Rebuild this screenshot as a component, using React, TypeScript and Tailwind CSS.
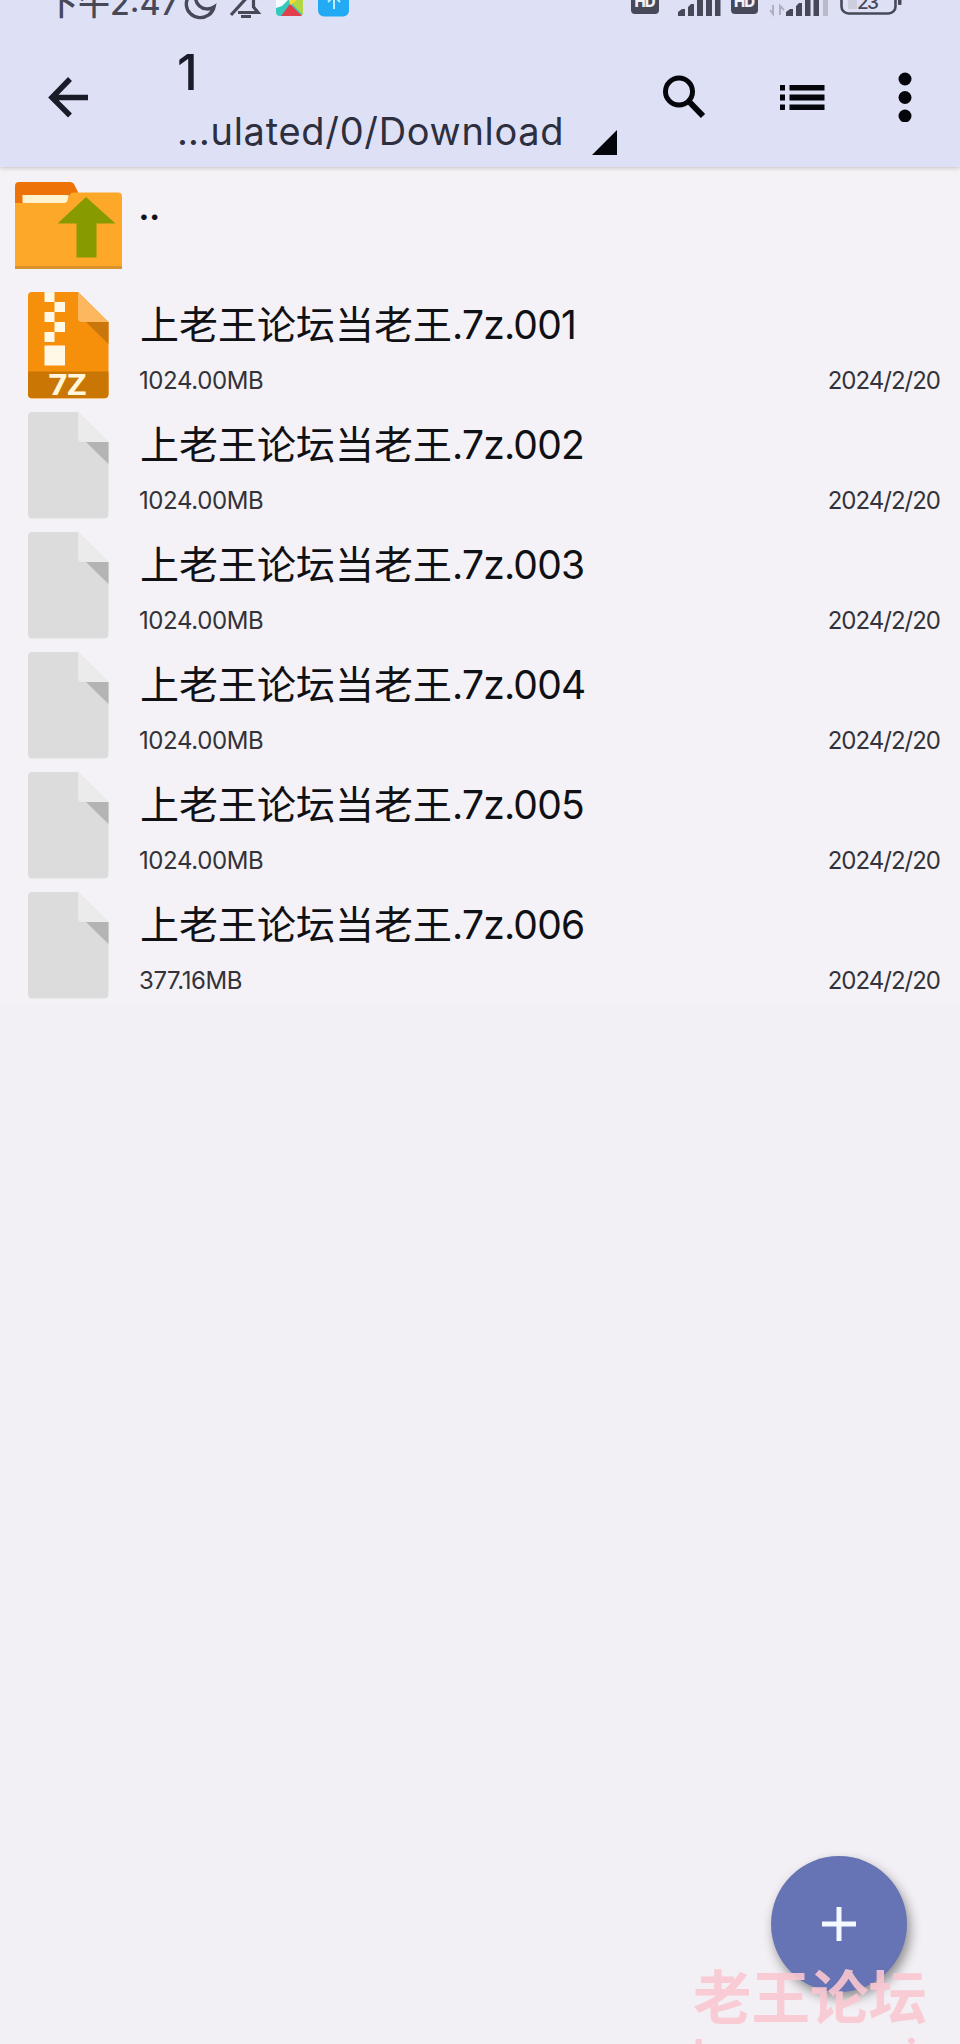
import React from "react";

const CJK = "font-['Inter','Noto_Sans_CJK_SC',sans-serif]";

const files = [
  { name: "001", size: "1024.00MB", archive: true },
  { name: "002", size: "1024.00MB", archive: false },
  { name: "003", size: "1024.00MB", archive: false },
  { name: "004", size: "1024.00MB", archive: false },
  { name: "005", size: "1024.00MB", archive: false },
  { name: "006", size: "377.16MB", archive: false },
];

function StatusLeftIcons() {
  return (
    <svg width="170" height="20" viewBox="184 0 170 20" className="shrink-0">
      <path d="M197 -9 A14 13.5 0 1 0 214 7 A12 12 0 0 1 197 -9Z" fill="none" stroke="#474959" strokeWidth="3.4" />
      <g fill="none" stroke="#474959" strokeWidth="3.2">
        <path d="M231 15 L252 -8" />
        <path d="M238 12.5 H258 L253.5 7 V-4" />
        <path d="M241 16.5 H251" strokeWidth="3" />
      </g>
      <path d="M276 0H303V12Q303 16 299 16H280Q276 16 276 12Z" fill="#33c9bd" />
      <path d="M276 0H288L282 6L276 8Z" fill="#f5fbff" />
      <path d="M291 0H303V15L293 5Z" fill="#b3d645" />
      <path d="M289 0H297L290 6Z" fill="#f7d93a" />
      <path d="M290 4L302 16H281Z" fill="#e13e4e" />
      <rect x="318" y="-14" width="31" height="30.500" rx="6" fill="#22abf4" />
      <path d="M334 9V-4M328 2L334 -4L340 2" fill="none" stroke="#c3edff" strokeWidth="2" />
    </svg>
  );
}

function StatusRightIcons() {
  return (
    <svg width="274" height="20" viewBox="630 0 274 20" className="shrink-0">
      <g fill="#474959">
        <rect x="631" y="-12" width="28" height="26" rx="4" />
        <rect x="731" y="-12" width="27" height="26" rx="4" />
        <path d="M678 16V12L682 9H685V16ZM688 16V7L691 4H694V16Z" />
        <path d="M697 0H703V16H697ZM706 0H712V16H706ZM715 0H720.500V16H715Z" />
        <path d="M786 16V12L790 9H793V16ZM796 16V6L799 3H802V16Z" />
        <path d="M805 0H810.500V16H805ZM813.500 0H819V16H813.500Z" />
        <rect x="898" y="-4" width="3.500" height="9" rx="1" />
      </g>
      <rect x="823" y="0" width="5" height="16" fill="#b9bbc9" />
      <path d="M773 5V14L770 10M780 15V6L784 10" fill="none" stroke="#aeb0c0" strokeWidth="2" />
      <rect x="848" y="0" width="9" height="9" fill="#cccede" />
      <rect x="841.500" y="-14" width="54" height="27.500" rx="7" fill="none" stroke="#474959" strokeWidth="2.600" />
      <g fontFamily="Inter, sans-serif">
        <text x="634.500" y="7" fontSize="15" fontWeight="800" fill="#eef0fc" textLength="21">HD</text>
        <text x="734" y="7" fontSize="15" fontWeight="800" fill="#eef0fc" textLength="21">HD</text>
        <text x="857" y="9" fontSize="19" fontWeight="500" fill="#474959" textLength="22">23</text>
      </g>
    </svg>
  );
}

function FolderUpIcon() {
  return (
    <svg width="108" height="88" viewBox="15 182 108 88">
      <path d="M15 203V186Q15 182 19 182H70Q73 182 74.500 185L78 192V203Z" fill="#ed7309" />
      <rect x="22.500" y="195" width="46" height="8" fill="#fff3cf" />
      <path d="M15 203H64Q67 203 67.500 200L70 194.500Q71 192.500 74 192.500H118Q122 192.500 122 196.500V269H15Z" fill="#fda829" />
      <path d="M15 202H22.500V203H15Z" fill="#ed7309" />
      <rect x="15" y="266" width="107" height="3" fill="#d9922c" />
      <path d="M86 197L115.500 223.500H96.500V257.500H76.500V223.500H57.500Z" fill="#879b00" />
    </svg>
  );
}

function FileIcon({ archive }: { archive: boolean }) {
  return (
    <svg width="82" height="108" viewBox="0 0 82 108">
      <path d="M4 0H50L80.500 30V102Q80.500 106.500 76 106.500H4Q0 106.500 0 102V4Q0 0 4 0Z" fill={archive ? "#f6900a" : "#dcdcdd"} />
      <path d="M50 0L80.500 30H54Q50 30 50 26Z" fill={archive ? "#fcb75f" : "#ebebec"} />
      <path d="M58 30H80.500V52Z" fill={archive ? "#c9760a" : "#b4b4b5"} />
      {archive && (
        <>
          <path d="M0 79.500H80.500V102Q80.500 106 76 106H4Q0 106 0 102Z" fill="#c97604" />
          <path d="M16.500 0H26.500V10H16.500ZM26.500 10H37V20H26.500ZM16.500 20H26.500V30H16.500ZM26.500 30H37V40H26.500ZM16.500 40H26.500V50H16.500ZM16.500 53.500H37V73.500H16.500Z" fill="#fff8e6" />
          <text x="20.500" y="103" fontSize="28" fontWeight="700" fill="#fff6dc" fontFamily="Open Sans, sans-serif" textLength="38" lengthAdjust="spacingAndGlyphs">7Z</text>
        </>
      )}
    </svg>
  );
}

export default function App() {
  return (
    <div className={`relative flex h-[2044px] w-[960px] flex-col overflow-hidden bg-[#f2f0f4] text-[#101115] ${CJK}`}>
      <header className="z-10 h-[167px] shrink-0 bg-[#dee1f6] shadow-[0_1px_4px_rgba(90,80,70,0.3)]">
        <div className="flex h-5 items-start pl-[46px] pr-[56px] text-[#474959]">
          <div className="-mt-5 w-[138px] shrink-0 whitespace-nowrap text-[32px] font-medium leading-[48px]">下午2:47</div>
          <StatusLeftIcons />
          <div className="flex-1" />
          <StatusRightIcons />
        </div>
        <div className="flex h-[147px] items-start">
          <svg width="42" height="42" viewBox="0 0 42 42" className="ml-[48px] mt-[56px] shrink-0" fill="none" stroke="#1b1c29" strokeWidth="5.500">
            <path d="M40 21.500H4M22 3L4 21.500L22 39.500" />
          </svg>
          <div className="ml-[87px] flex w-[415px] flex-col whitespace-nowrap">
            <div className="mt-[22px] h-[60px] text-[50px] font-medium leading-[60px] text-[#1b1c29]">1</div>
            <div className="mt-[5px] h-[48px] text-[38px] leading-[48px] tracking-[0.7px] text-[#2d2f3f]">…ulated/0/Download</div>
          </div>
          <svg width="26" height="26" viewBox="0 0 26 26" className="mt-[110px] shrink-0">
            <path d="M25 0V25H0Z" fill="#05060c" />
          </svg>
          <svg width="44" height="44" viewBox="0 0 44 44" className="ml-[44px] mt-[55px] shrink-0" fill="none" stroke="#05060c" strokeWidth="5">
            <circle cx="17" cy="16.500" r="13.500" />
            <path d="M27 26.500L41 41" strokeWidth="6" />
          </svg>
          <svg width="46" height="26" viewBox="0 0 46 26" className="ml-[74px] mt-[65px] shrink-0" fill="#05060c">
            <path d="M0 0H5V5.500H0ZM9.500 0H44.500V5.500H9.500ZM0 9.500H5V15.500H0ZM9.500 9.500H44.500V15.500H9.500ZM0 19.500H5V25H0ZM9.500 19.500H44.500V25H9.500Z" />
          </svg>
          <svg width="14" height="50" viewBox="0 0 14 50" className="ml-[72px] mt-[52px] shrink-0" fill="#05060c">
            <circle cx="7" cy="7" r="6.500" />
            <circle cx="7" cy="25.500" r="6.500" />
            <circle cx="7" cy="44" r="6.500" />
          </svg>
        </div>
      </header>

      <main className="shrink-0 bg-[#f4f2f6]">
        <div className="flex h-[118px] items-start pl-[15px] pt-[15px]">
          <FolderUpIcon />
          <div className="ml-[15px] text-[39px] font-medium leading-[48px] tracking-[-1px]">..</div>
        </div>
        {files.map((f) => (
          <div key={f.name} className="flex h-[120px] items-start pl-[28px] pr-[20px] pt-[7px]">
            <FileIcon archive={f.archive} />
            <div className="ml-[30px] flex flex-1 flex-col">
              <div className="h-[69px] whitespace-nowrap text-[39px] leading-[66px]">
                上老王论坛当老王<span className="tracking-[-0.8px]">.7z.{f.name}</span>
              </div>
              <div className="flex h-[40px] justify-between text-[24px] leading-[40px] text-[#333339]">
                <span className="-ml-px tracking-[-0.4px]">{f.size}</span>
                <span className="tracking-[-1px]">2024/2/20</span>
              </div>
            </div>
          </div>
        ))}
      </main>

      <button className="absolute left-[771px] top-[1856px] flex h-[136px] w-[136px] items-center justify-center rounded-full bg-[#6673b4] shadow-[3px_6px_12px_rgba(0,0,0,0.42)]">
        <svg width="34" height="34" viewBox="0 0 34 34" stroke="#f4f8ff" strokeWidth="5">
          <path d="M17 0V34M0 17H34" />
        </svg>
      </button>
      <div className="absolute left-[693px] top-[1960px] whitespace-nowrap font-bold text-[#fac6d0]/90">
        <div className="h-[66px] text-[58.500px] leading-[76px]">老王论坛</div>
        <div className="h-[60px] text-[42px] leading-[58px]">laowang.vip</div>
      </div>
    </div>
  );
}
